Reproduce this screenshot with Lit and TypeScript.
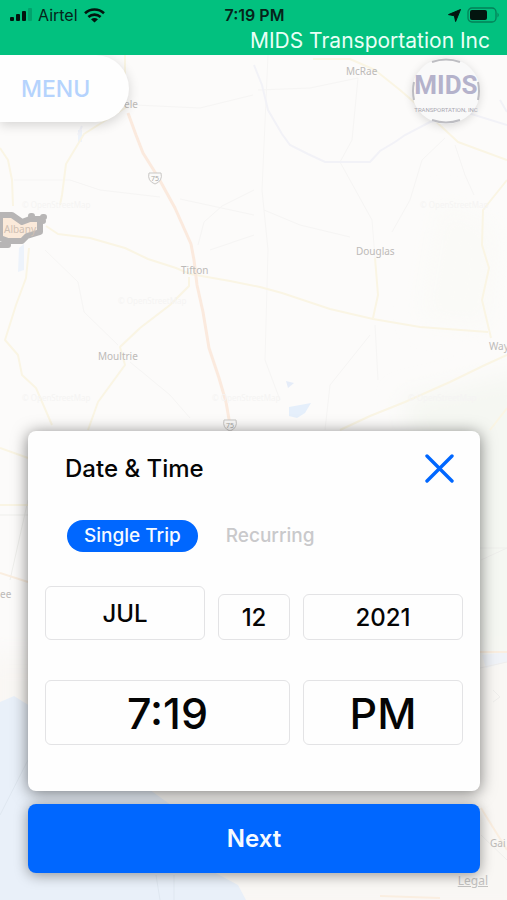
import { LitElement, html, css } from "lit";
import { customElement, state } from "lit/decorators.js";

@customElement("status-header")
class StatusHeader extends LitElement {
  static styles = css`
    :host {
      display: block;
      background: #02c17f;
      color: #06241a;
    }
    .bar {
      display: grid;
      grid-template-columns: 1fr auto 1fr;
      align-items: center;
      height: 30px;
      padding: 0 7px 0 9px;
      font-size: 16px;
      line-height: 20px;
    }
    .group {
      display: flex;
      align-items: center;
      gap: 6px;
    }
    .end {
      justify-content: flex-end;
    }
    .clock {
      font-weight: 600;
    }
    .company {
      margin: 0;
      padding: 0 17px 3px;
      font-size: 21px;
      line-height: 22px;
      font-weight: 400;
      text-align: right;
      color: #e9fff6;
    }
    svg {
      display: block;
      flex: none;
    }
  `;

  render() {
    return html`
      <div class="bar">
        <div class="group">
          <svg width="23" height="14" viewBox="0 0 23 14" aria-label="Signal">
            <g fill="#03150f">
              <rect x="1" y="9" width="4" height="4" rx="1" />
              <rect x="7" y="6" width="4" height="7" rx="1" />
              <rect x="13" y="3" width="4" height="10" rx="1" />
            </g>
            <rect x="19" y="0" width="4" height="13" rx="1" fill="#02a26c" />
          </svg>
          <span>Airtel</span>
          <svg width="21" height="15" viewBox="0 0 21 15" aria-label="Wi-Fi">
            <g fill="none" stroke="#03150f" stroke-width="2.6">
              <path d="M1 5.2C6.4 0.2 14.6 0.2 20 5.2" />
              <path d="M4.4 9C8 5.8 13 5.8 16.6 9" />
            </g>
            <path d="M10.500 14.600L7 11.200Q10.500 8.600 14 11.200Z" fill="#03150f" />
          </svg>
        </div>
        <span class="clock">7:19 PM</span>
        <div class="group end">
          <svg width="13" height="13" viewBox="0 0 13 13" aria-label="Location">
            <path d="M12.500 0.500L7.600 12.500L6.400 6.800L0.500 5.600Z" fill="#03150f" stroke="#03150f" stroke-linejoin="round" />
          </svg>
          <svg width="33" height="16" viewBox="0 0 33 16" aria-label="Battery">
            <rect x="1" y="1" width="28" height="14" rx="4" fill="none" stroke="#058058" stroke-width="1.300" />
            <rect x="3" y="3" width="17" height="10" rx="2" fill="#03150f" />
            <path d="M30.500 5.500Q33 8 30.500 10.500Z" fill="#058058" />
          </svg>
        </div>
      </div>
      <p class="company">MIDS Transportation Inc</p>
    `;
  }
}

@customElement("area-map")
class AreaMap extends LitElement {
  static styles = css`
    :host {
      display: block;
      background: #fcfbfa;
    }
    svg {
      display: block;
      width: 100%;
      height: 100%;
    }
    .road {
      fill: none;
      stroke: #faf5e4;
      stroke-width: 2;
      stroke-linejoin: round;
    }
    .main {
      stroke: #fbeade;
      stroke-width: 3;
    }
    .minor {
      fill: none;
      stroke: #f6f5f4;
      stroke-width: 1;
    }
    .river {
      fill: none;
      stroke: #f2f2f7;
      stroke-width: 2;
    }
    .town {
      font: 10px "Noto Sans", sans-serif;
      fill: #bcbab8;
    }
    .city {
      fill: #cfc0b3;
    }
    .shield {
      fill: #fbfaf9;
      stroke: #c9c7c5;
      stroke-width: 1;
    }
    .route {
      font: 7px "Noto Sans", sans-serif;
      fill: #aaa8a6;
      text-anchor: middle;
    }
    .mark {
      font: 8px "Noto Sans", sans-serif;
      fill: #f5f4f3;
    }
  `;

  render() {
    return html`
      <svg viewBox="0 55 507 845" preserveAspectRatio="xMidYMin slice" aria-label="Map of southern Georgia">
        <defs>
          <filter id="soft" x="-20%" y="-20%" width="140%" height="140%">
            <feGaussianBlur stdDeviation="12" />
          </filter>
        </defs>
        <g filter="url(#soft)">
          <path d="M440 200L500 230L490 330L420 320Z" fill="#fafaf7" />
          <path d="M400 400L530 370V680H470L440 500Z" fill="#f5f7f2" />
          <path d="M-20 655H530V920H-20Z" fill="#f9f7f4" />
        </g>
        <path d="M0 702L14 696L30 706L60 760L150 790L185 815L210 870L238 885L246 900H0Z" fill="#e9f0f9" />
        <path d="M482 655L507 652V662L486 668Z" fill="#f0f3f8" />
        <path d="M289 407L311 403L305 413L297 418L289 416Z" fill="#e5effb" />
        <path d="M286 381L294 383L288 388Z" fill="#e5ecf8" />
        <path d="M78 130H82V142H78ZM19 248L24 244L24 270L18 272Z" fill="#edf3fb" />

        <g class="minor">
          <path d="M14 180L70 180L100 190L160 197M180 199L254 215" />
          <path d="M45 250L78 282L84 312L118 345M130 362L170 395L190 418" />
          <path d="M254 190L222 206L204 222L198 245M254 235L210 250" />
          <path d="M268 55L262 190L268 250L265 360L280 400" />
          <path d="M258 90L310 88L358 78L352 140L340 162L372 220L376 270" />
          <path d="M264 210L300 225L350 237M445 138L422 160L410 200L392 232M455 145L465 175L474 195" />
          <path d="M375 325L378 380M370 335L330 385L325 430M135 105L200 108L253 95" />
          <path d="M0 515H28M480 548H507M10 580L28 500M481 560L507 548" stroke="#efefec" />
          <path d="M0 815L28 760M156 875L160 900M174 875V900" stroke="#dfe7f0" />
          <path d="M481 835L507 860M493 690L500 697L493 702M480 668L507 662" stroke="#efeeec" />
        </g>
        <g class="river">
          <path d="M254 65L262 85L268 110L282 134L290 145L308 154L325 162H370L380 151L395 142L405 135L430 122L465 112L507 125" />
          <path d="M82 126L78 135M500 100L507 112" />
        </g>
        <g class="road">
          <path d="M125 55V108L84 134L66 164L62 195L60 205M46 226L58 234L90 238L125 248L148 259L176 268L190 274L230 281L260 287L282 293L330 309L373 319L420 327L488 332" />
          <path d="M0 148L8 160L12 180L13 206M29 248L26 278L16 305L5 340L18 355L22 375L36 388L52 425" />
          <path d="M189 277V286L170 305L140 328L120 347L125 365L98 402L88 430" />
          <path d="M375 258L378 295L373 318M313 59H350L375 70L400 90L430 116L458 142L507 160" />
          <path d="M507 180L483 210L482 245L489 268L482 300L491 338M507 355L485 365L450 382L405 402L370 416L340 430" />
          <path d="M507 408L490 430M0 448L28 458M0 505H28" />
          <path d="M0 573L28 582M480 652H507M481 808L507 850M380 896L440 898" stroke="#faeee0" />
        </g>
        <path class="road main" d="M128 113L136 135L143 153L158 177L175 208L191 244L194 260L197 285L203 312L209 348L219 378L226 402L230 425" />

        <path d="M0 215L12 215L22 222L30 219L40 219L40 232L27 236L22 241L8 241L0 238Z" fill="#fbeada" stroke="#b7b5b5" stroke-width="6" stroke-linejoin="round" />
        <path d="M0 245H8M31 216L32 216M43 217L44 217M0 225V231M43 221H43" fill="none" stroke="#b7b5b5" stroke-width="6" stroke-linecap="round" />

        <g class="mark">
          <text x="22" y="208">© OpenStreetMap</text>
          <text x="420" y="208">© OpenStreetMap</text>
          <text x="118" y="304">© OpenStreetMap</text>
          <text x="22" y="401">© OpenStreetMap</text>
          <text x="212" y="401">© OpenStreetMap</text>
          <text x="408" y="401">© OpenStreetMap</text>
        </g>
        <g class="town">
          <text class="city" x="4" y="233">Albany</text>
          <text x="346" y="75">McRae</text>
          <text x="124" y="108">ele</text>
          <text x="181" y="274">Tifton</text>
          <text x="356" y="255">Douglas</text>
          <text x="98" y="360">Moultrie</text>
          <text x="489" y="350">Way</text>
          <text x="0" y="598">ee</text>
          <text x="490" y="847">Gai</text>
        </g>
        <path class="shield" d="M149 173H161Q163 181 155 184Q147 181 149 173Z" />
        <text class="route" x="155" y="181">75</text>
        <path class="shield" d="M224 420H236Q238 428 230 431Q222 428 224 420Z" />
        <text class="route" x="230" y="428">75</text>
      </svg>
    `;
  }
}

@customElement("trip-form")
class TripForm extends LitElement {
  @state() private mode = "single";

  static styles = css`
    :host {
      display: block;
    }
    form {
      display: grid;
      gap: 13px;
    }
    .card {
      padding: 22px 17px 46px;
      border-radius: 8px;
      background: #fefefe;
      box-shadow: 0 2px 16px rgba(0, 0, 0, 0.5);
    }
    .head {
      display: flex;
      align-items: center;
      justify-content: space-between;
      padding: 0 9px 0 20px;
    }
    h1 {
      margin: 0;
      font-size: 24px;
      line-height: 32px;
      font-weight: 500;
      color: #050505;
    }
    .close {
      display: block;
      padding: 0;
      border: 0;
      background: none;
      cursor: pointer;
    }
    .close svg {
      display: block;
    }
    .modes {
      display: flex;
      gap: 11px;
      margin: 35px 0 34px;
      padding: 0 22px;
    }
    .mode {
      position: relative;
      padding: 0 17px;
      border-radius: 16px;
      font-size: 19px;
      line-height: 32px;
      font-weight: 500;
      color: #c9c9cb;
      cursor: pointer;
    }
    .mode.on {
      background: #0067ff;
      color: #f6faff;
    }
    .mode input {
      position: absolute;
      inset: 0;
      margin: 0;
      appearance: none;
    }
    .fields {
      display: grid;
      grid-template-columns: 160fr 72fr 160fr;
      gap: 40px 13px;
      align-items: end;
    }
    .field {
      box-sizing: border-box;
      width: 100%;
      min-width: 0;
      height: 46px;
      margin: 0;
      padding: 0;
      appearance: none;
      border: 1px solid #e3e3e5;
      border-radius: 6px;
      background: #fefefe;
      color: #050505;
      font: 500 24px "Inter", sans-serif;
      text-align: center;
      text-align-last: center;
    }
    .tall {
      height: 54px;
    }
    .large {
      height: 65px;
      font-size: 43px;
    }
    .wide {
      grid-column: span 2;
    }
    .next {
      height: 69px;
      border: 0;
      border-radius: 8px;
      background: #0067ff;
      color: #f6faff;
      font: 600 24px "Inter", sans-serif;
      box-shadow: 0 2px 14px rgba(0, 0, 0, 0.4);
      cursor: pointer;
    }
  `;

  private modeOption(value: string, label: string) {
    const on = this.mode === value;
    return html`
      <label class="mode ${on ? "on" : ""}">
        <input type="radio" name="mode" .checked=${on} @change=${() => (this.mode = value)} />${label}
      </label>
    `;
  }

  render() {
    return html`
      <form @submit=${(e: Event) => e.preventDefault()}>
        <section class="card">
          <div class="head">
            <h1>Date &amp; Time</h1>
            <button class="close" type="button" aria-label="Close">
              <svg width="30" height="30" viewBox="0 0 30 30">
                <path d="M3 2L28 27M28 2L3 27" stroke="#0067ff" stroke-width="3.400" stroke-linecap="round" />
              </svg>
            </button>
          </div>
          <div class="modes" role="radiogroup" aria-label="Trip type">
            ${this.modeOption("single", "Single Trip")} ${this.modeOption("recurring", "Recurring")}
          </div>
          <div class="fields">
            <select class="field tall" aria-label="Month">
              <option>JUL</option>
            </select>
            <input class="field" aria-label="Day" value="12" />
            <input class="field" aria-label="Year" value="2021" />
            <input class="field large wide" aria-label="Time" value="7:19" />
            <select class="field large" aria-label="AM or PM">
              <option>PM</option>
            </select>
          </div>
        </section>
        <button class="next" type="submit">Next</button>
      </form>
    `;
  }
}

@customElement("app-root")
class AppRoot extends LitElement {
  static styles = css`
    :host {
      display: flex;
      flex-direction: column;
      min-height: 100vh;
      font-family: "Inter", sans-serif;
    }
    main {
      position: relative;
      flex: 1;
      display: flex;
      flex-direction: column;
      justify-content: space-between;
      gap: 24px;
      overflow: hidden;
    }
    area-map {
      position: absolute;
      inset: 0;
    }
    .top {
      position: relative;
      display: flex;
      justify-content: space-between;
      align-items: flex-start;
      padding-right: 27px;
    }
    .menu {
      height: 67px;
      padding: 0 39px 0 21px;
      border: 0;
      border-radius: 0 34px 34px 0;
      background: #fefefe;
      color: #b5d3fd;
      font: 500 23px "Inter", sans-serif;
      box-shadow: 0 3px 12px rgba(0, 0, 0, 0.16);
      cursor: pointer;
    }
    .logo {
      position: relative;
      display: flex;
      flex-direction: column;
      align-items: center;
      justify-content: center;
      gap: 4px;
      width: 68px;
      height: 66px;
      margin-top: 3px;
      border-radius: 50%;
      background: #f9f9f9;
      box-shadow: 0 2px 10px rgba(0, 0, 0, 0.14);
      color: #b4b2cb;
      font-family: "Roboto", sans-serif;
      white-space: nowrap;
    }
    .ring {
      position: absolute;
      inset: 0;
      fill: none;
      stroke: #bdbdc2;
      stroke-width: 2;
    }
    .name {
      font-size: 26px;
      line-height: 34px;
      font-weight: 700;
    }
    .sub {
      font-size: 6px;
      line-height: 8px;
      font-weight: 400;
      color: #a9a8b2;
    }
    trip-form {
      position: relative;
      padding: 0 27px 27px 28px;
    }
    .legal {
      position: absolute;
      right: 19px;
      bottom: 11px;
      color: #c3c2c0;
      font: 12px/16px "Noto Sans", sans-serif;
    }
  `;

  render() {
    return html`
      <status-header></status-header>
      <main>
        <area-map></area-map>
        <a class="legal" href="#legal">Legal</a>
        <div class="top">
          <button class="menu" type="button">MENU</button>
          <div class="logo">
            <svg class="ring" viewBox="0 0 68 66" aria-hidden="true">
              <path d="M20 4Q34 -1 48 4M20 62Q34 67 48 62M2 24Q0 33 2 42M66 24Q68 33 66 42" />
            </svg>
            <span class="name">MIDS</span>
            <span class="sub">TRANSPORTATION, INC</span>
          </div>
        </div>
        <trip-form></trip-form>
      </main>
    `;
  }
}
